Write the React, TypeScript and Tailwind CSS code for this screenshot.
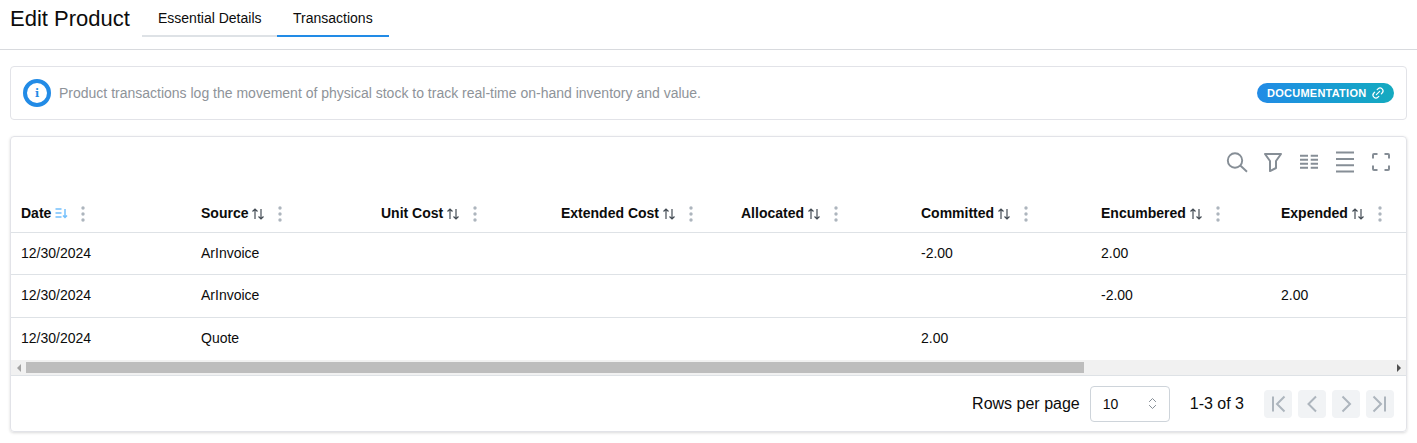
import { ChevronsUpDown, Link2 } from "lucide-react"

const columns = ["Date", "Source", "Unit Cost", "Extended Cost", "Allocated", "Committed", "Encumbered", "Expended"]

const rows = [
  ["12/30/2024", "ArInvoice", "", "", "", "-2.00", "2.00", ""],
  ["12/30/2024", "ArInvoice", "", "", "", "", "-2.00", "2.00"],
  ["12/30/2024", "Quote", "", "", "", "2.00", "", ""],
]

function SortIcon() {
  return (
    <svg width="14" height="14" viewBox="0 0 14 14" fill="none" stroke="#444c54" strokeWidth="1.2" className="ml-[3px] mt-[2px] shrink-0">
      <path d="M4 12V2M1.500 4.500L4 2l2.500 2.500" />
      <path d="M10 2v10M7.500 9.500L10 12l2.500-2.500" />
    </svg>
  )
}

function SortedIcon() {
  return (
    <svg width="14" height="14" viewBox="0 0 14 14" fill="none" stroke="#74c0fc" strokeWidth="1.5" className="ml-[3px] shrink-0">
      <path d="M1.500 3h6M1.500 7h6M1.500 11h6" />
      <path d="M11 3v8.500M9 9.500l2 2 2-2" />
    </svg>
  )
}

function Dots() {
  return (
    <svg width="4" height="16" viewBox="0 0 4 16" fill="#adb5bd" className="shrink-0 mt-[2px]">
      <circle cx="2" cy="2" r="1.700" />
      <circle cx="2" cy="8" r="1.700" />
      <circle cx="2" cy="14" r="1.700" />
    </svg>
  )
}

function PagerButton({ d }: { d: string }) {
  return (
    <div className="w-7 h-7 rounded bg-[#f1f3f5] flex items-center justify-center text-[#adb5bd]">
      <svg width="20" height="20" viewBox="0 0 20 20" fill="none" stroke="currentColor" strokeWidth="2">
        <path d={d} />
      </svg>
    </div>
  )
}

export default function App() {
  return (
    <div className="w-[1417px] h-[443px] overflow-hidden bg-white text-[#0c0c0c] font-['Liberation_Sans',Arial,sans-serif]">
      <div className="h-[50px] border-b border-[#d8dade] flex pl-[10px]">
        <div className="text-[22px] leading-[25px] pt-[6px] w-[132px]">Edit Product</div>
        <div className="flex h-[37px] text-sm">
          <div className="w-[135px] pl-4 pt-2 border-b-2 border-[#dee2e6]">Essential Details</div>
          <div className="w-[112px] pl-4 pt-2 border-b-2 border-[#228be6]">Transactions</div>
        </div>
      </div>

      <div className="mx-[10px] mt-4 h-[54px] border border-[#e2e3e8] rounded flex items-center pl-3 pr-3">
        <div className="w-7 h-7 rounded-full border-[4px] border-[#228be6] flex items-center justify-center shrink-0">
          <span className="text-[#228be6] font-['DejaVu_Serif',serif] font-bold text-[11px] leading-none">i</span>
        </div>
        <div className="ml-2 text-sm text-[#8e9399]">
          Product transactions log the movement of physical stock to track real-time on-hand inventory and value.
        </div>
        <div className="ml-auto h-5 w-[137px] rounded-full bg-gradient-to-r from-[#228be6] to-[#15aabf] text-white text-[11px] tracking-[0.25px] font-bold flex items-center pl-[10px] gap-[5px]">
          DOCUMENTATION
          <Link2 size={14} strokeWidth={2} className="-rotate-45" />
        </div>
      </div>

      <div className="mx-[10px] mt-4 h-[296px] border border-[#e2e3e8] rounded shadow-[0_1px_3px_rgba(0,0,0,0.15)] overflow-hidden flex flex-col">
        <div className="h-[58px] shrink-0 flex items-start justify-end pt-[13px] pr-[13px] gap-3 text-[#868e96]">
          <svg width="24" height="24" viewBox="0 0 24 24" fill="none" stroke="currentColor" strokeWidth="1.900">
            <circle cx="10" cy="10.500" r="7.200" />
            <path d="M15.300 15.500L22 21.700" />
          </svg>
          <svg width="24" height="24" viewBox="0 0 24 24" fill="none" stroke="currentColor" strokeWidth="2" strokeLinejoin="round">
            <path d="M4 4h16l-5 7v7l-6 3V11z" />
          </svg>
          <svg width="24" height="24" viewBox="0 0 24 24" fill="none" stroke="currentColor" strokeWidth="2">
            <path d="M3 5.700h8M13.700 5.700H21M3 9.700h8M13.700 9.700H21M3 13.700h8M13.700 13.700H21M3 17.700h8M13.700 17.700H21" />
          </svg>
          <svg width="24" height="24" viewBox="0 0 24 24" fill="none" stroke="currentColor" strokeWidth="1.900">
            <path d="M3 2.500h18M3 9h18M3 15.300h18M3 21.500h18" />
          </svg>
          <svg width="24" height="24" viewBox="0 0 24 24" fill="none" stroke="currentColor" strokeWidth="2">
            <path d="M4 8.500V5a1 1 0 0 1 1-1h3.500M15.500 4H19a1 1 0 0 1 1 1v3.500M20 15.500V19a1 1 0 0 1-1 1h-3.500M8.500 20H5a1 1 0 0 1-1-1v-3.500" />
          </svg>
        </div>

        <div className="overflow-hidden shrink-0">
          <div className="w-[1440px] grid grid-cols-[repeat(8,180px)] h-[38px] border-b border-[#dee2e6] text-sm font-bold">
            {columns.map((c) => (
              <div key={c} className="flex items-center pl-[10px] pb-[2px]">
                <span>{c}</span>
                {c === "Date" ? <SortedIcon /> : <SortIcon />}
                <span className="ml-[13px]">
                  <Dots />
                </span>
              </div>
            ))}
          </div>
          {rows.map((row, i) => (
            <div
              key={i}
              className="w-[1440px] grid grid-cols-[repeat(8,180px)] h-[42.4px] pb-[1.5px] border-b border-[#dee2e6] last:border-b-0 text-sm items-center"
            >
              {row.map((cell, j) => (
                <div key={j} className="pl-[10px]">
                  {cell}
                </div>
              ))}
            </div>
          ))}
        </div>

        <div className="h-[15px] shrink-0 bg-[#f1f1f1] flex items-center">
          <div className="w-[15px] flex justify-center">
            <div className="w-0 h-0 border-y-[4px] border-y-transparent border-r-[4px] border-r-[#a3a3a3]" />
          </div>
          <div className="w-[1058px] h-[11px] bg-[#bdbdbd]" />
          <div className="ml-auto w-[15px] flex justify-center">
            <div className="w-0 h-0 border-y-[4px] border-y-transparent border-l-[4px] border-l-[#505050]" />
          </div>
        </div>

        <div className="flex-1 border-t border-[#dee2e6] flex items-center justify-end pr-3 text-base">
          <span>Rows per page</span>
          <div className="ml-[10px] w-20 h-9 border border-[#ced4da] rounded flex items-center justify-between pl-3 pr-[9px] text-sm">
            10
            <ChevronsUpDown size={15} strokeWidth={1.6} className="text-[#868e96]" />
          </div>
          <span className="ml-5 mr-5">1-3 of 3</span>
          <div className="flex gap-1.5">
            <PagerButton d="M5 2.500v15M16.500 2.500L9 10l7.500 7.500" />
            <PagerButton d="M14 2.500L6.500 10l7.500 7.500" />
            <PagerButton d="M6.500 2.500L14 10l-7.500 7.500" />
            <PagerButton d="M15 2.500v15M3.500 2.500L11 10l-7.500 7.500" />
          </div>
        </div>
      </div>
    </div>
  )
}
